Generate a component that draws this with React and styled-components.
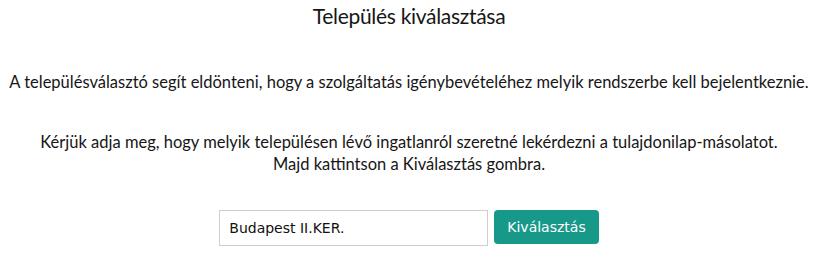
import React, { useState } from 'react';
import styled, { createGlobalStyle } from 'styled-components';

const Global = createGlobalStyle`
  html, body { margin: 0; padding: 0; background: #fff; }
  body { font-family: Lato, "Open Sans", sans-serif; color: #161616; }
`;

const Page = styled.div`
  width: 818px;
  height: 260px;
  display: flex;
  flex-direction: column;
  align-items: center;
  text-align: center;
`;

const Title = styled.h1`
  margin: 2px 0 0;
  font-size: 21px;
  font-weight: 400;
  letter-spacing: -0.3px;
  line-height: 28px;
`;

const Text = styled.p`
  margin: ${p => p.$top}px 0 0;
  font-size: 16.5px;
  line-height: 22px;
`;

const Form = styled.form`
  display: flex;
  align-items: flex-start;
  gap: 6px;
  margin-top: 35px;
`;

const Input = styled.input`
  box-sizing: border-box;
  width: 269px;
  height: 36px;
  padding: 0 9px;
  border: 1px solid #cfcfcf;
  border-radius: 0;
  font-family: "DejaVu Sans", Verdana, sans-serif;
  font-size: 14px;
  color: #111;
  outline: none;
`;

const Button = styled.button`
  box-sizing: border-box;
  height: 34px;
  padding: 0 13px;
  border: none;
  border-radius: 4px;
  background: #17998a;
  color: #fff;
  font-family: "DejaVu Sans", Verdana, sans-serif;
  font-size: 14px;
  cursor: pointer;
`;

export default function App() {
  const [value, setValue] = useState('Budapest II.KER.');
  return (
    <Page>
      <Global />
      <Title>Település kiválasztása</Title>
      <Text $top={41}>
        A településválasztó segít eldönteni, hogy a szolgáltatás igénybevételéhez melyik rendszerbe kell bejelentkeznie.
      </Text>
      <Text $top={38}>
        Kérjük adja meg, hogy melyik településen lévő ingatlanról szeretné lekérdezni a tulajdonilap-másolatot.
        <br />
        Majd kattintson a Kiválasztás gombra.
      </Text>
      <Form onSubmit={e => e.preventDefault()}>
        <Input value={value} onChange={e => setValue(e.target.value)} />
        <Button type="submit">Kiválasztás</Button>
      </Form>
    </Page>
  );
}
